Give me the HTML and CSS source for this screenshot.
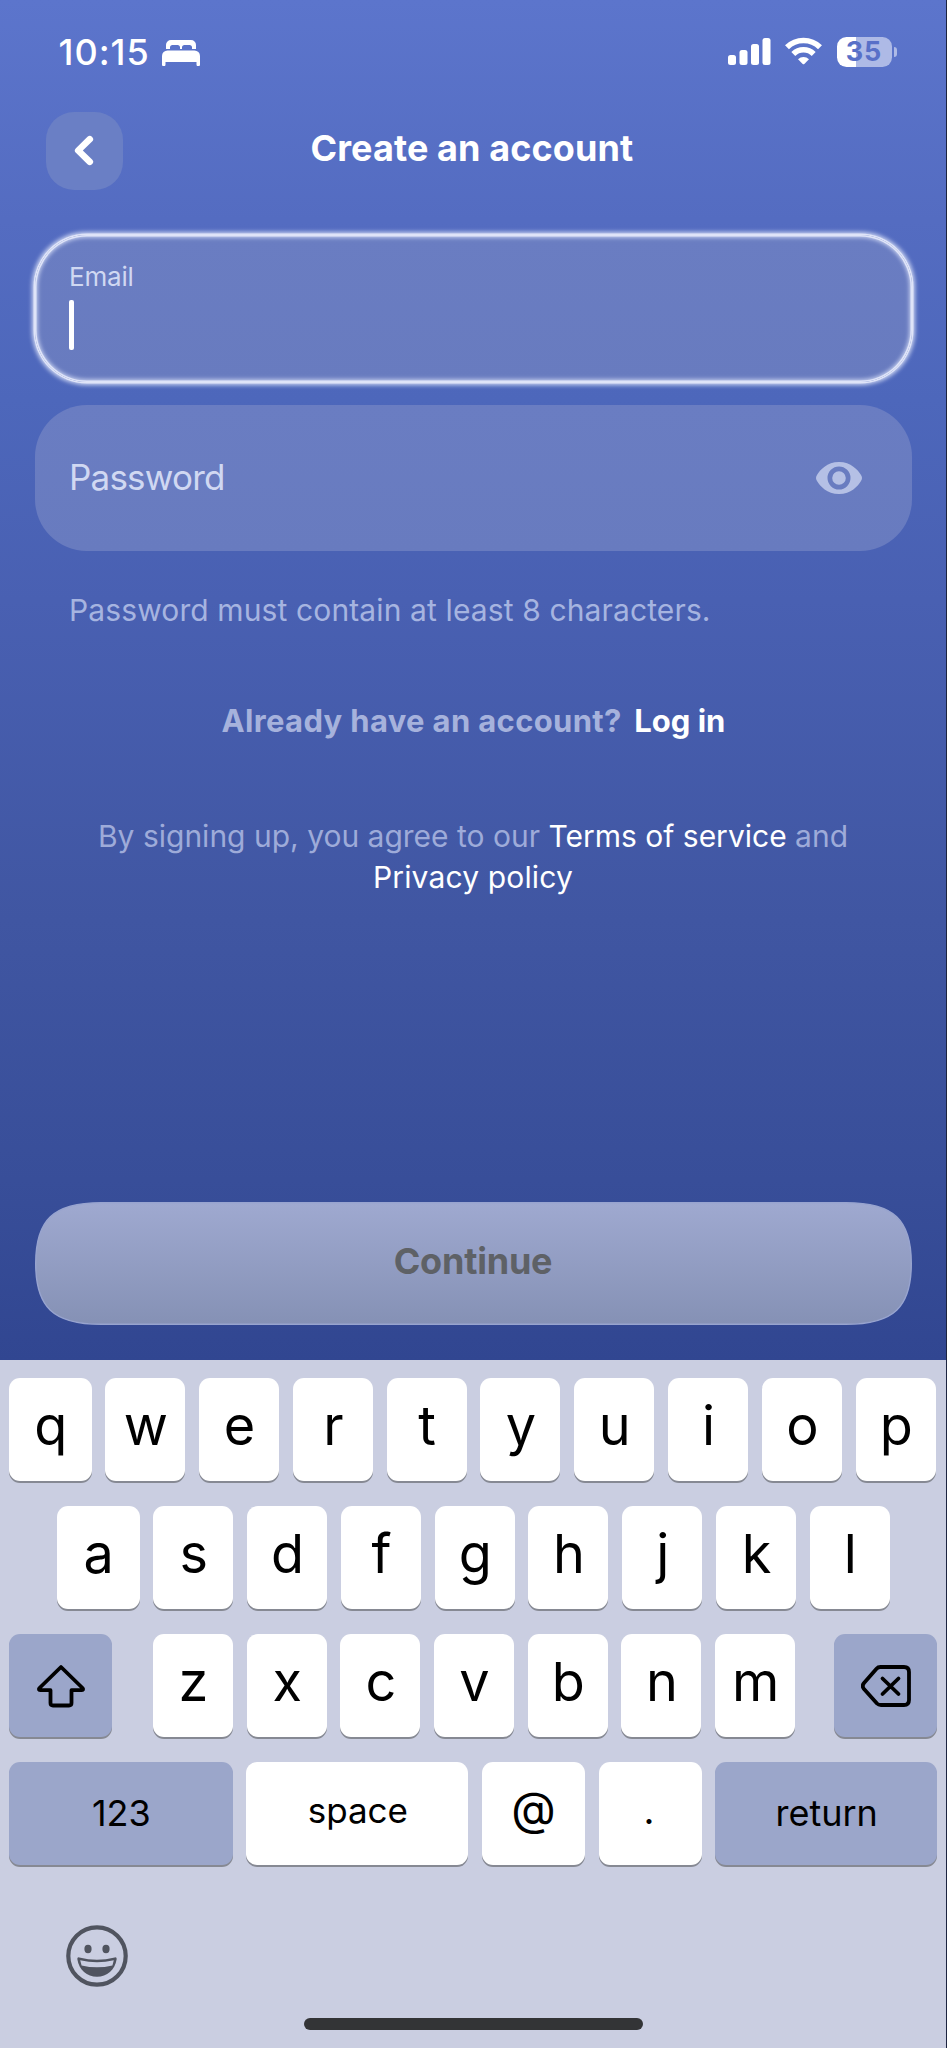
FILE: index.html
```html
<!DOCTYPE html>
<html lang="en">
<head>
<meta charset="utf-8">
<title>Create an account</title>
<link rel="stylesheet" href="styles.css">
</head>
<body>
<main class="screen">
  <section class="signup">
    <div class="status">
      <span class="time">10:15</span>
      <svg class="bed" width="38" height="26" viewBox="0 0 38 26"><path fill="#fff" d="M4 9V5a5 5 0 0 1 5-5h20a5 5 0 0 1 5 5v4h-4V7.500a2.500 2.500 0 0 0-2.500-2.500h-5A2.500 2.500 0 0 0 20 7.500V9h-2V7.500A2.500 2.500 0 0 0 15.500 5h-5A2.500 2.500 0 0 0 8 7.500V9zM0 16a5.500 5.500 0 0 1 5.500-5.500h27A5.500 5.500 0 0 1 38 16v8.500a1.500 1.500 0 0 1-3.500 0V22h-31v2.500a1.500 1.500 0 0 1-3.500 0z"/></svg>
      <svg class="signal" width="43" height="27" viewBox="0 0 43 27" fill="#fff"><rect y="17" width="8" height="10" rx="2.500"/><rect x="11.500" y="12" width="8" height="15" rx="2.500"/><rect x="23" y="6" width="8" height="21" rx="2.500"/><rect x="34.500" width="8" height="27" rx="2.500"/></svg>
      <svg class="wifi" width="37" height="28" viewBox="0 0 37 28"><g fill="none" stroke="#fff" stroke-width="5.600"><path d="M2 10.300a23.500 23.500 0 0 1 33 0"/><path d="M8.300 17a14.500 14.500 0 0 1 20.400 0"/></g><path fill="#fff" d="M13 22.300a8 8 0 0 1 11 0L19.300 27a1.200 1.200 0 0 1-1.600 0z"/></svg>
      <span class="battery"><span class="level">35</span></span><i class="tip"></i>
    </div>

    <header class="head">
      <button class="back" aria-label="Back"><svg width="20" height="32" viewBox="0 0 20 32"><path d="M15.800 4.200 4.200 15.500l11.600 11.300" fill="none" stroke="#fff" stroke-width="6.600" stroke-linecap="round" stroke-linejoin="round"/></svg></button>
      <h1 class="title">Create an account</h1>
    </header>

    <div class="field focused"><span class="label">Email</span><i class="caret"></i></div>
    <div class="field password"><span class="placeholder">Password</span>
      <svg class="eye" width="46" height="32" viewBox="0 0 46 32"><path fill="#b5c0e5" fill-rule="evenodd" d="M23 0C35 0 42 8 45 13q2 3 0 6c-3 5-10 13-22 13S4 24 1 19q-2-3 0-6C4 8 11 0 23 0zm0 4.500a11.500 11.500 0 1 0 0 23 11.500 11.500 0 0 0 0-23zm0 4.700a6.800 6.800 0 1 1 0 13.600 6.800 6.800 0 0 1 0-13.600z"/></svg>
    </div>
    <p class="hint">Password must contain at least 8 characters.</p>
    <p class="login"><span class="question">Already have an account?</span><a class="login-link">Log in</a></p>
    <p class="terms"><span class="terms-line">By signing up, you agree to our <a>Terms of service</a> and</span><br><a class="privacy">Privacy policy</a></p>
    <button class="continue">
      <svg class="plate" width="877" height="123" viewBox="0 0 877 123"><defs><linearGradient id="plate" x1="0" y1="0" x2="0" y2="1"><stop offset="0" stop-color="#9fa9d0"/><stop offset="1" stop-color="#8591b5"/></linearGradient></defs><path d="M.7 61.500C.7 18 18 .7 66 .7H811C859 .7 876.300 18 876.300 61.500S859 122.300 811 122.300H66C18 122.300.7 105 .7 61.500z" fill="url(#plate)" stroke="#98a4cf" stroke-width="1.400"/></svg>
      <span class="continue-text">Continue</span>
    </button>
  </section>

  <section class="keyboard">
    <div class="row first"><b>q</b><b>w</b><b>e</b><b>r</b><b>t</b><b>y</b><b>u</b><b>i</b><b>o</b><b>p</b></div>
    <div class="row second"><b>a</b><b>s</b><b>d</b><b>f</b><b>g</b><b>h</b><b>j</b><b>k</b><b>l</b></div>
    <div class="row third">
      <b class="dark"><svg class="shift" width="50" height="44" viewBox="0 0 50 44"><path d="M25 3 3.500 24q-1.500 2 .8 2.200H14.500V39q0 2.500 2.500 2.500h16q2.500 0 2.500-2.500V26.200h10.200q2.300-.2.800-2.200z" fill="none" stroke="#000" stroke-width="3.800" stroke-linejoin="round"/></svg></b>
      <div class="letters"><b>z</b><b>x</b><b>c</b><b>v</b><b>b</b><b>n</b><b>m</b></div>
      <b class="dark"><svg width="50" height="42" viewBox="0 0 50 42"><g fill="none" stroke="#000" stroke-width="3.800" stroke-linecap="round" stroke-linejoin="round"><path d="M19.500 2H43q5 0 5 5v28q0 5-5 5H20q-2.500 0-4-1.500L3 24q-2.500-3 0-6L15.500 3.700Q17 2 19.500 2z"/><path d="m21.500 13.500 16 15.500m0-15.500-16 15.500"/></g></svg></b>
    </div>
    <div class="row fourth"><b class="dark wide">123</b><b class="space">space</b><b class="at">@</b><b class="dot">.</b><b class="dark return">return</b></div>
    <svg class="emoji" width="62" height="62" viewBox="0 0 62 62"><circle cx="31" cy="31" r="28.700" fill="none" stroke="#50545f" stroke-width="4.200"/><ellipse cx="22" cy="24" rx="3.600" ry="4.200" fill="#50545f"/><ellipse cx="40" cy="24" rx="3.600" ry="4.200" fill="#50545f"/><path fill="#50545f" fill-rule="evenodd" d="M11.300 34q0-2.200 2-1.500 17.700 4.500 35.400 0 2-.7 2 1.500C49 45 41 51.800 31 51.800S13 45 11.300 34zm2.900 1.200 1.400 5.200q15.400 3.800 30.800 0l1.400-5.200Q31 39.200 14.200 35.200z"/></svg>
    <i class="home"></i>
  </section>
</main>
</body>
</html>
```
FILE: styles.css
```css
* { box-sizing: border-box; }
body { margin: 0; background: #1c2440; font-family: Inter, "Liberation Sans", sans-serif; }
.screen { width: 946px; height: 2048px; overflow: hidden; }
button { border: 0; padding: 0; font: inherit; }
p, h1 { margin: 0; white-space: nowrap; }
svg { display: block; flex: none; }

.signup {
  height: 1360px;
  padding: 0 34.500px;
  color: #fff;
  background: linear-gradient(#5c75cc 0, #546cc1 220px, #4d67bb 400px, #4960b2 600px, #4056a2 920px, #384e99 1180px, #314691 1360px);
}
.status { display: flex; height: 112px; padding: 36px 0 0 24px; }
.time { width: 103.500px; height: 32px; font-size: 36px; line-height: 32px; font-weight: 550; letter-spacing: 1px; }
.bed { margin-top: 3.500px; }
.signal { margin: 2px 0 0 528px; }
.wifi { margin: 1px 0 0 14px; }
.battery {
  width: 55px; height: 30px; margin: .5px 0 0 14.500px; border-radius: 9.500px;
  background: linear-gradient(90deg, #fff 19px, #aebae6 19px);
  font-size: 27px; font-weight: 700; line-height: 30px; text-align: center; letter-spacing: .8px; color: #5870c8;
}
.tip { width: 3.500px; height: 10px; margin: 11px 0 0 2px; border-radius: 0 4px 4px 0; background: #aebae6; }

.head { display: flex; height: 123px; padding-left: 11.500px; }
.back { display: flex; align-items: center; justify-content: center; width: 77px; height: 78px; padding-right: 2px; border-radius: 28px; background: #6a7fc5; }
.title { margin: 13.500px 0 0 187.500px; font-weight: 700; font-size: 36px; line-height: 44px; letter-spacing: .1px; }

.field { height: 147px; padding-left: 34.500px; border-radius: 52px; background: linear-gradient(#6a7dc2, #687bbf); }
.focused {
  display: flex; flex-direction: column; padding-top: 26px;
  box-shadow: 0 0 0 1.500px #dfe4f8, inset 0 0 0 1.500px #dfe4f8, 0 0 4px 2.500px #ccd5f2, inset 0 0 4px 2.500px #ccd5f2;
}
.label { height: 38.500px; font-size: 26px; line-height: 32px; letter-spacing: -.2px; color: #d0d8f2; }
.caret { width: 5px; height: 50px; border-radius: 2px; background: #fff; }
.password { display: flex; align-items: center; height: 146px; margin-top: 23px; padding-right: 50px; justify-content: space-between; }
.placeholder { margin-bottom: 2px; font-size: 35px; letter-spacing: -.8px; color: #d0d8f2; }

.hint { height: 60px; margin: 39px 0 0 34.500px; font-size: 30px; line-height: 40px; letter-spacing: .12px; color: #a6b4e0; }
.login { display: flex; gap: 12.500px; height: 80px; margin: 49px 0 0 187px; font-weight: 700; font-size: 31px; line-height: 44px; }
.question { color: #a6b2dc; letter-spacing: .34px; }
.terms { height: 84px; margin-top: 37px; text-align: center; font-size: 30px; line-height: 41px; color: #9eabd9; }
.terms a { color: #fff; }
.privacy { letter-spacing: .15px; }
.continue {
  display: grid; place-items: center;
  width: 877px; height: 123px; margin-top: 302px; background: none;
  font-weight: 700; font-size: 36px; letter-spacing: -.2px; color: #5e6166;
}
.plate, .continue-text { grid-area: 1 / 1; }
.continue-text { margin-bottom: 5px; }

.keyboard { height: 688px; padding: 18px 9px 0; background: #cacee1; color: #000; }
.row { display: flex; height: 128px; gap: 13.800px; }
.row b {
  display: flex; justify-content: center; width: 80px; height: 103px; padding-left: 1px; border-radius: 11px;
  background: #fff; box-shadow: 0 2px 0 #868993; font-weight: 400; font-size: 54px; line-height: 95px;
}
.row .dark { align-items: center; background: #9ba6ca; }
.first b:first-child, .second b:first-child { width: 82.500px; }
.second { padding-left: 48px; }
.third { gap: 0; }
.row.third .dark { width: 103px; }
.letters { display: flex; gap: 13.700px; margin: 0 39px 0 41px; }
.shift { margin-top: 1px; }
.row .wide, .row .space, .row .return { font-size: 36px; font-weight: 400; }
.row .wide { width: 224px; }
.row .space { width: 222px; font-size: 35px; line-height: 97px; }
.row .at, .row .dot { width: 103px; padding-left: 0; font-size: 46px; line-height: 92px; }
.row .dot { padding-right: 2px; font-size: 38px; line-height: 96px; }
.row .return { width: 222px; }
.fourth { height: 163px; }
.emoji { margin-left: 57px; }
.home { display: block; width: 339px; height: 12px; margin: 31px 0 0 295px; border-radius: 6px; background: #333436; }
```
